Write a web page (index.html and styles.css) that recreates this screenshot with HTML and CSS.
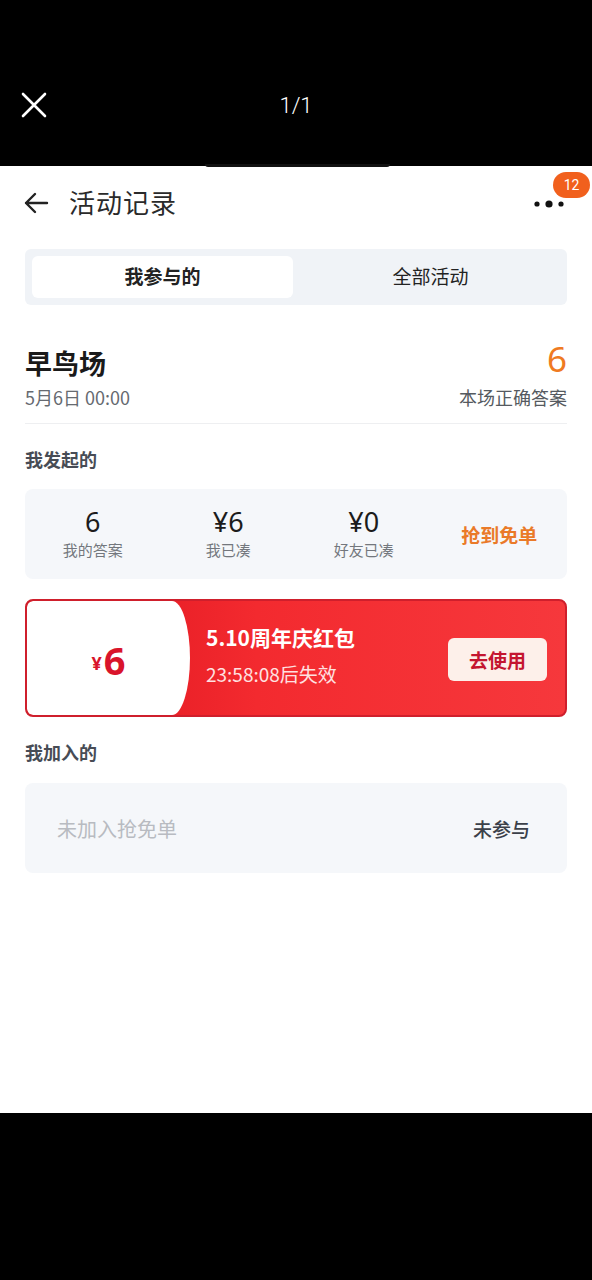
FILE: index.html
```html
<!DOCTYPE html>
<html lang="zh">
<head>
<meta charset="utf-8">
<title>活动记录</title>
<link rel="stylesheet" href="styles.css">
</head>
<body>
<div class="viewer-top">
  <div class="viewer-row">
    <svg class="close-icon" width="26" height="26" viewBox="0 0 26 26"><path d="M2 2 L24 24 M24 2 L2 24" stroke="#fff" stroke-width="2.6" stroke-linecap="round"/></svg>
    <span class="counter">1/1</span>
  </div>
</div>
<main class="page">
  <header class="header">
    <svg class="back" width="26" height="24" viewBox="0 0 26 24"><path d="M24 12 H3 M12 3 L3 12 L12 21" fill="none" stroke="#222" stroke-width="2.4" stroke-linecap="round" stroke-linejoin="round"/></svg>
    <h1 class="title">活动记录</h1>
    <div class="more">
      <svg width="30" height="10" viewBox="0 0 30 10"><circle cx="3" cy="5" r="2.6" fill="#111"/><circle cx="15" cy="5" r="3.6" fill="#111"/><circle cx="27" cy="5" r="2.6" fill="#111"/></svg>
      <span class="badge">12</span>
    </div>
  </header>

  <div class="tabs">
    <div class="tab active">我参与的</div>
    <div class="tab">全部活动</div>
  </div>

  <section class="event">
    <div class="event-name">早鸟场</div>
    <div class="event-answer">6</div>
    <div class="event-time">5月6日 00:00</div>
    <div class="event-label">本场正确答案</div>
  </section>
  <div class="divider"></div>

  <h2 class="section-title">我发起的</h2>
  <div class="stats">
    <div class="stat"><div class="stat-num">6</div><div class="stat-label">我的答案</div></div>
    <div class="stat"><div class="stat-num">¥6</div><div class="stat-label">我已凑</div></div>
    <div class="stat"><div class="stat-num">¥0</div><div class="stat-label">好友已凑</div></div>
    <div class="stat stat-result">抢到免单</div>
  </div>

  <div class="coupon">
    <div class="coupon-left"><span class="yen">¥</span><span class="amount">6</span></div>
    <div class="coupon-info">
      <div class="coupon-title">5.10周年庆红包</div>
      <div class="coupon-expire">23:58:08后失效</div>
    </div>
    <button class="coupon-btn">去使用</button>
  </div>

  <h2 class="section-title joined">我加入的</h2>
  <div class="empty-card">
    <span class="empty-text">未加入抢免单</span>
    <span class="empty-status">未参与</span>
  </div>
</main>
<div class="viewer-bottom"></div>
</body>
</html>
```
FILE: styles.css
```css
* { box-sizing: border-box; }
html, body { margin: 0; padding: 0; }
body {
  width: 592px;
  background: #000;
  font-family: "Noto Sans CJK SC", "Noto Sans", sans-serif;
}
.viewer-top {
  position: relative;
  height: 166px;
  background: #000;
  padding-top: 80px;
}
.viewer-top::after {
  content: "";
  position: absolute;
  left: 205px;
  width: 185px;
  bottom: -1px;
  height: 3px;
  background: #111;
  border-radius: 0 0 8px 8px;
  z-index: 2;
}
.viewer-row {
  position: relative;
  height: 50px;
  display: flex;
  align-items: center;
  justify-content: center;
}
.close-icon { position: absolute; left: 21px; top: 12px; }
.counter {
  color: #fff;
  font-family: "Roboto", "Noto Sans", sans-serif;
  font-size: 22px;
  font-weight: 300;
}
.page {
  height: 947px;
  background: #fff;
  padding: 0 25px;
}
.header {
  position: relative;
  height: 74px;
  display: flex;
  align-items: center;
}
.back { margin-left: -2px; }
.title {
  margin: -4px 0 0 20px;
  font-size: 26px;
  font-weight: 400;
  color: #2a2a2a;
  letter-spacing: 1px;
}
.more {
  margin-left: auto;
  margin-right: 3px;
  display: flex;
  margin-top: 2px;
}
.badge {
  position: absolute;
  right: -23px;
  top: 6px;
  width: 37px;
  height: 26px;
  border-radius: 13px;
  background: #f1601d;
  color: #fff;
  font-family: "Roboto", sans-serif;
  font-size: 14px;
  line-height: 26px;
  text-align: center;
}
.tabs {
  margin-top: 9px;
  height: 56px;
  background: #f0f3f7;
  border-radius: 6px;
  padding: 7px;
  display: flex;
}
.tab {
  flex: 1;
  display: flex;
  align-items: center;
  justify-content: center;
  font-size: 19px;
  color: #222;
  padding-bottom: 3px;
}
.tab.active {
  flex: 0 0 261px;
  background: #fff;
  border-radius: 6px;
  font-weight: 700;
}
.tab:not(.active) { padding-left: 8px; }
.event {
  margin-top: 42px;
  display: grid;
  grid-template-columns: 1fr auto;
  grid-template-rows: 32px 24px;
  row-gap: 6px;
}
.event-name {
  font-size: 27px;
  font-weight: 700;
  color: #1a1a1a;
  line-height: 32px;
}
.event-answer {
  justify-self: end;
  font-family: "Noto Sans", sans-serif;
  font-size: 35px;
  color: #ef7a22;
  line-height: 32px;
  margin-top: -4px;
}
.event-time {
  font-size: 18px;
  color: #666a70;
  line-height: 24px;
}
.event-label {
  justify-self: end;
  font-size: 18px;
  color: #555a60;
  line-height: 24px;
}
.divider {
  margin-top: 14px;
  height: 1px;
  background: #eeeff1;
}
.section-title {
  margin: 23px 0 0;
  font-size: 18px;
  line-height: 24px;
  font-weight: 700;
  color: #474c55;
}
.stats {
  margin-top: 18px;
  height: 90px;
  background: #f5f7fa;
  border-radius: 8px;
  display: grid;
  grid-template-columns: repeat(4, 1fr);
  align-items: center;
}
.stat { text-align: center; }
.stat-num {
  font-family: "Noto Sans", sans-serif;
  font-size: 27px;
  line-height: 28px;
  color: #1c1c1c;
}
.stat-label {
  font-size: 15px;
  line-height: 20px;
  color: #73777d;
  margin-top: 4px;
}
.stat-result {
  font-size: 19px;
  font-weight: 700;
  color: #ea7a28;
}
.coupon {
  margin-top: 20px;
  height: 118px;
  border: 2px solid #cf1f2c;
  border-radius: 8px;
  background: linear-gradient(90deg, #dc121d 0px, #f32a2f 230px, #f6383c 100%);
  display: flex;
  align-items: stretch;
  overflow: hidden;
}
.coupon-left {
  flex: 0 0 163px;
  background: #fff;
  border-radius: 6px 18px 18px 6px / 6px 50% 50% 6px;
  display: flex;
  align-items: center;
  justify-content: center;
  color: #d9142b;
  font-family: "Noto Sans", sans-serif;
  font-weight: 700;
  padding-top: 4px;
}
.yen { font-size: 18px; margin-right: 2px; margin-top: 6px; }
.amount { font-size: 38px; line-height: 40px; }
.coupon-info {
  flex: 1;
  padding: 18px 0 0 16px;
}
.coupon-title {
  font-size: 21px;
  font-weight: 700;
  color: #fff;
  line-height: 36px;
}
.coupon-expire {
  margin-top: 5px;
  font-size: 19px;
  color: #ffe1e1;
  line-height: 28px;
}
.coupon-btn {
  align-self: center;
  margin-right: 18px;
  margin-top: 2px;
  width: 99px;
  height: 43px;
  border: none;
  border-radius: 6px;
  background: #fdf0ea;
  color: #c41530;
  font-family: "Noto Sans CJK SC", sans-serif;
  font-size: 19px;
  font-weight: 700;
}
.section-title.joined { margin-top: 23px; }
.empty-card {
  margin-top: 19px;
  height: 90px;
  background: #f5f7fa;
  border-radius: 8px;
  display: flex;
  align-items: center;
  justify-content: space-between;
  padding: 0 37px 0 32px;
}
.empty-text { font-size: 20px; color: #b8bbc1; }
.empty-status { font-size: 19px; font-weight: 500; color: #3b4049; }
.viewer-bottom { height: 167px; background: #000; }
```
